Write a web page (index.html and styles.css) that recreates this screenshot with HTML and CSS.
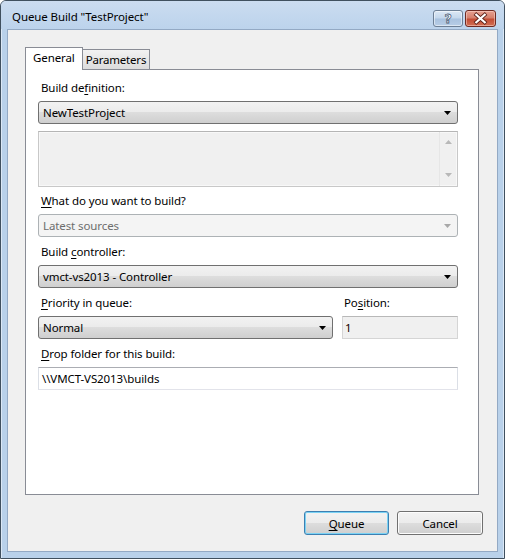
FILE: index.html
```html
<!DOCTYPE html>
<html>
<head>
<meta charset="utf-8">
<link rel="stylesheet" href="styles.css">
</head>
<body>
<div class="window">
  <div class="titlebar">
    <span class="title">Queue Build "TestProject"</span>
    <div class="caption-btns">
      <div class="cbtn help">
        <svg width="29" height="17" viewBox="0 0 29 17"><text x="14.5" y="13.5" text-anchor="middle" class="qglyph">?</text></svg>
      </div>
      <div class="cbtn close">
        <svg width="31" height="17" viewBox="0 0 31 17"><path d="M11 4.5 L20 12.5 M20 4.5 L11 12.5" stroke="#5a2018" stroke-width="4" stroke-linecap="square"/><path d="M11 4.5 L20 12.5 M20 4.5 L11 12.5" stroke="#fff" stroke-width="2.4" stroke-linecap="square"/></svg>
      </div>
    </div>
  </div>
  <div class="client">
    <div class="tabs">
      <div class="tab-headers">
        <div class="tab active">General</div>
        <div class="tab">Parameters</div>
      </div>
      <div class="tab-panel">
        <div class="label">Build de<u>f</u>inition:</div>
        <div class="combo"><span>NewTestProject</span><svg class="arrow" width="7" height="4" viewBox="0 0 7 4"><path d="M0 0 H7 L3.5 4 Z" fill="#000"/></svg></div>
        <div class="desc">
          <div class="scroll">
            <svg width="7" height="4" viewBox="0 0 7 4"><path d="M0 4 H7 L3.5 0 Z" fill="#b8b8b8"/></svg>
            <svg width="7" height="4" viewBox="0 0 7 4"><path d="M0 0 H7 L3.5 4 Z" fill="#b8b8b8"/></svg>
          </div>
        </div>
        <div class="label"><u>W</u>hat do you want to build?</div>
        <div class="combo disabled"><span>Latest sources</span><svg class="arrow" width="7" height="4" viewBox="0 0 7 4"><path d="M0 0 H7 L3.5 4 Z" fill="#a8a8a8"/></svg></div>
        <div class="label">Build <u>c</u>ontroller:</div>
        <div class="combo"><span>vmct-vs2013 - Controller</span><svg class="arrow" width="7" height="4" viewBox="0 0 7 4"><path d="M0 0 H7 L3.5 4 Z" fill="#000"/></svg></div>
        <div class="row">
          <div class="col-main">
            <div class="label"><u>P</u>riority in queue:</div>
            <div class="combo"><span>Normal</span><svg class="arrow" width="7" height="4" viewBox="0 0 7 4"><path d="M0 0 H7 L3.5 4 Z" fill="#000"/></svg></div>
          </div>
          <div class="col-side">
            <div class="label side-label">Po<u>s</u>ition:</div>
            <div class="textbox readonly"><span class="num">1</span></div>
          </div>
        </div>
        <div class="label"><u>D</u>rop folder for this build:</div>
        <div class="textbox"><span>\\VMCT-VS2013\builds</span></div>
      </div>
    </div>
    <div class="buttons">
      <div class="btn default"><u>Q</u>ueue</div>
      <div class="btn">Cancel</div>
    </div>
  </div>
</div>
</body>
</html>
```

FILE: styles.css
```css
* { box-sizing: border-box; }
html, body { margin: 0; padding: 0; }
body {
  width: 505px;
  height: 559px;
  overflow: hidden;
  background: #fff;
  font-family: "Noto Sans", "Open Sans", sans-serif;
  font-size: 11.5px;
  letter-spacing: -0.1px;
  color: #000;
}
.window {
  width: 505px;
  height: 559px;
  border: 1px solid #40505f;
  border-radius: 6px 6px 0 0;
  background: #b9d1ea;
  display: flex;
  flex-direction: column;
  padding: 0 6px 6px 6px;
  box-shadow: inset 1px 1px 0 #dbe8f6, inset -1px 0 0 #dbe8f6;
}
.titlebar {
  height: 28px;
  margin: 0 -6px;
  padding: 0 8px 0 11px;
  display: flex;
  align-items: flex-start;
  justify-content: space-between;
  background: linear-gradient(#cbdcf0, #bcd3ec);
  border-radius: 5px 5px 0 0;
}
.title {
  margin-top: 8px;
  line-height: 16px;
  color: #000;
}
.caption-btns {
  display: flex;
  gap: 2px;
  margin-top: 9px;
}
.cbtn {
  height: 17px;
  border: 1px solid #6d7f95;
  border-radius: 3px;
  display: flex;
  align-items: center;
  justify-content: center;
  overflow: hidden;
}
.cbtn svg { display: block; }
.help {
  width: 30px;
  background: linear-gradient(#dce8f5 0%, #c4d7ec 48%, #a9c2df 52%, #b7cde6 100%);
  box-shadow: inset 0 0 0 1px rgba(255,255,255,0.5);
}
.qglyph {
  font-family: "DejaVu Sans", sans-serif;
  font-weight: bold;
  font-size: 13px;
  fill: #fff;
  stroke: #4d5f78;
  stroke-width: 0.8px;
}
.close {
  width: 31px;
  border-color: #6e2a22;
  background: linear-gradient(#e6a091 0%, #d5806d 45%, #c24d35 55%, #d26f55 100%);
  box-shadow: inset 0 0 0 1px rgba(255,220,210,0.5);
}
.client {
  flex: 1;
  background: #f0f0f0;
  border: 1px solid #93a9c4;
  display: flex;
  flex-direction: column;
  padding: 17px 18px 0 17px;
}
.tabs { display: flex; flex-direction: column; }
.tab-headers {
  display: flex;
  align-items: flex-start;
  height: 22px;
  position: relative;
  z-index: 2;
}
.tab {
  height: 20px;
  margin-top: 2px;
  border: 1px solid #898c95;
  border-bottom: none;
  background: linear-gradient(#f2f2f2, #dcdcdc);
  padding: 0 3px 0 3px;
  line-height: 19px;
  margin-left: -1px;
  letter-spacing: -0.2px;
}
.tab.active {
  height: 23px;
  margin-top: 0;
  background: #fff;
  margin-left: 0;
  padding: 0 7px 0 7px;
  line-height: 20px;
  letter-spacing: -0.1px;
  position: relative;
  z-index: 3;
}
.tab-panel {
  height: 426px;
  background: #fff;
  border: 1px solid #898c95;
  padding: 10px 20px 0 12px;
  display: flex;
  flex-direction: column;
}
.label {
  padding-left: 3px;
  line-height: 16px;
  height: 16px;
  margin-bottom: 5px;
}
.label u { text-underline-offset: 2px; }
.combo {
  height: 23px;
  border: 1px solid #707070;
  border-radius: 3px;
  background: linear-gradient(#f2f2f2 0%, #ebebeb 50%, #dddddd 50%, #cfcfcf 100%);
  display: flex;
  align-items: center;
  justify-content: space-between;
  padding: 0 6px 0 4px;
  margin-bottom: 7px;
}
.combo span { line-height: 16px; }
.combo .arrow { display: block; }
.combo.disabled {
  border-color: #adb2b5;
  background: #f4f4f4;
  color: #6d6d6d;
}
.desc {
  height: 56px;
  border: 1px solid #c8c8c8;
  border-top-color: #b5b5b5;
  background: #f0f0f0;
  display: flex;
  justify-content: flex-end;
  margin-bottom: 6px;
  box-shadow: inset 0 0 0 1px #f8f8f8;
}
.scroll {
  width: 18px;
  border-left: 1px solid #e6e6e6;
  display: flex;
  flex-direction: column;
  justify-content: space-between;
  align-items: center;
  padding: 8px 0 9px 0;
}
.scroll svg { display: block; }
.row {
  display: flex;
  gap: 9px;
}
.col-main { flex: 0 0 295px; display: flex; flex-direction: column; }
.col-side { flex: 1; display: flex; flex-direction: column; }
.side-label { padding-left: 2px; }
.textbox {
  height: 23px;
  border: 1px solid #e2e3ea;
  border-top-color: #abadb3;
  border-left-color: #dbdfe6;
  border-right-color: #dbdfe6;
  background: #fff;
  display: flex;
  align-items: center;
  padding: 0 3px;
  margin-bottom: 7px;
}
.textbox.readonly {
  background: #f0f0f0;
  border-color: #d5d5d5;
  border-top-color: #b8b8b8;
  padding: 0 2px;
}
.num { color: #140000; }
.buttons {
  display: flex;
  justify-content: flex-end;
  gap: 8px;
  margin-top: 16px;
  margin-right: -4px;
}
.btn {
  width: 86px;
  height: 24px;
  border: 1px solid #707070;
  border-radius: 3px;
  background: linear-gradient(#f2f2f2 0%, #ebebeb 50%, #dddddd 50%, #cfcfcf 100%);
  display: flex;
  align-items: center;
  justify-content: center;
  box-shadow: inset 0 0 0 1px #fcfcfc;
}
.btn.default {
  width: 85px;
  border-color: #3c7fb1;
  box-shadow: inset 0 0 0 1px #7ad2f4;
}
.btn u { text-underline-offset: 2px; }
```
